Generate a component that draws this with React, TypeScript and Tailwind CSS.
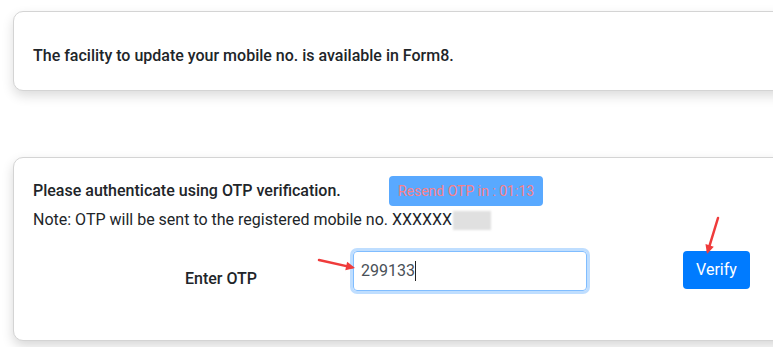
import React from 'react';

function Arrow({ x1, y1, x2, y2 }: { x1: number; y1: number; x2: number; y2: number }) {
  const ang = Math.atan2(y2 - y1, x2 - x1);
  const len = 10;
  const spread = 0.45;
  const ax = x2 - len * Math.cos(ang - spread);
  const ay = y2 - len * Math.sin(ang - spread);
  const bx = x2 - len * Math.cos(ang + spread);
  const by = y2 - len * Math.sin(ang + spread);
  return (
    <g>
      <line x1={x1} y1={y1} x2={x2 - 3 * Math.cos(ang)} y2={y2 - 3 * Math.sin(ang)} stroke="#ef3b3b" strokeWidth={2.5} strokeLinecap="round" />
      <polygon points={`${x2},${y2} ${ax},${ay} ${bx},${by}`} fill="#ef3b3b" />
    </g>
  );
}

export default function App() {
  return (
    <div className="relative w-[773px] h-[347px] overflow-hidden bg-white font-['Roboto',sans-serif] text-[#212529]">
      <div className="pl-[13px] pt-[11px]">
        {/* info card */}
        <div className="w-[800px] h-[80px] rounded-[10px] border border-[#d4d4d4] bg-white shadow-[0_5px_12px_rgba(0,0,0,0.14)] pl-[19px] pt-[33px]">
          <p className="text-[16px] font-medium leading-[22px]">
            The facility to update your mobile no. is available in Form8.
          </p>
        </div>

        {/* otp card */}
        <div className="mt-[66px] w-[800px] h-[184px] rounded-[10px] border border-[#d4d4d4] bg-white shadow-[0_5px_12px_rgba(0,0,0,0.16)] pl-[19px] pt-[18px]">
          <div className="flex items-center">
            <span className="w-[356px] text-[16px] font-medium leading-[22px]">
              Please authenticate using OTP verification.
            </span>
            <button className="h-[30px] w-[154px] rounded-[4px] bg-[#59a9ff] text-[14px] text-[#fa8088]">
              Resend OTP in : 01:13
            </button>
          </div>
          <div className="flex items-center mt-[2px] text-[16px] leading-[24px]">
            <span>Note: OTP will be sent to the registered mobile no. XXXXXX</span>
            <span className="ml-[1px] inline-block h-[19px] w-[38px] bg-[#e0e0e0] blur-[1px]" />
          </div>
          <div className="flex items-start mt-[19px]">
            <span className="ml-[152px] w-[168px] pt-[17px] text-[16px] font-medium leading-[22px]">Enter OTP</span>
            <div className="flex items-center h-[40px] w-[234px] rounded-[4px] border border-[#80bdff] shadow-[0_0_0_3px_rgba(0,123,255,0.25)] px-[7px] text-[16px] text-[#495057]">
              299133<span className="inline-block w-px h-[20px] bg-[#222]" />
            </div>
            <button className="ml-[96px] h-[38px] w-[67px] rounded-[4px] bg-[#007bff] text-[16px] text-white">
              Verify
            </button>
          </div>
        </div>
      </div>

      <svg className="absolute left-0 top-0 pointer-events-none" width="773" height="347">
        <Arrow x1={319} y1={260} x2={355} y2={268} />
        <Arrow x1={718} y1={218} x2={707} y2={254} />
      </svg>
    </div>
  );
}
